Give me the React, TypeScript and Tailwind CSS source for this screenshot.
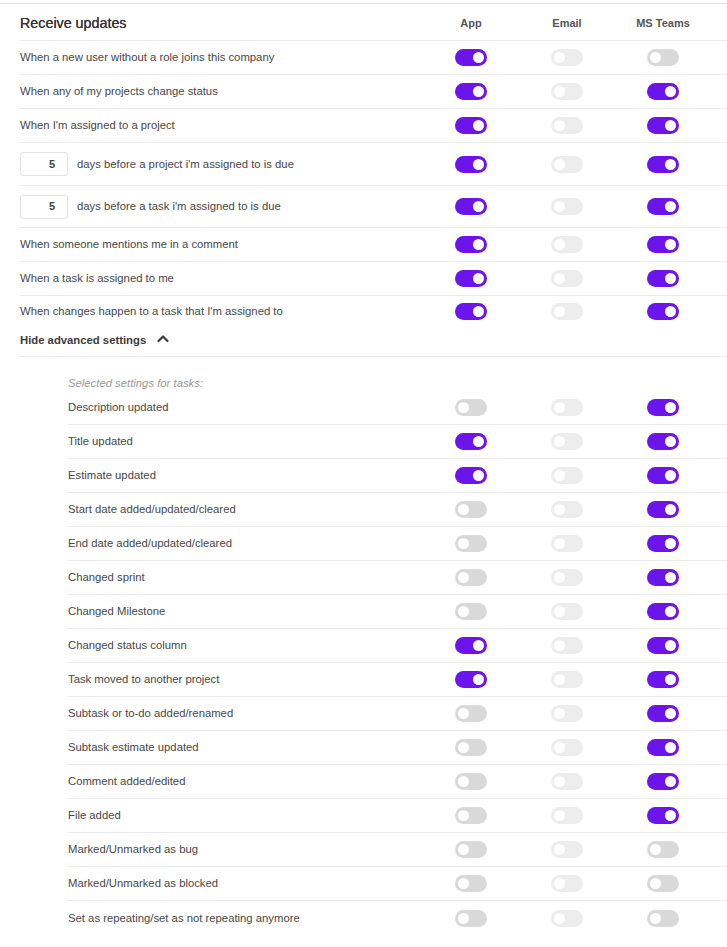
import { type FC } from "react";

type State = "on" | "off" | "disabled";

const Toggle: FC<{ state: State }> = ({ state }) => {
  const track =
    state === "on" ? "bg-[#6b15ec]" : state === "off" ? "bg-[#d9d9d9]" : "bg-[#ededed]";
  return (
    <div className={`flex h-[17px] w-[32px] items-center rounded-full px-[3px] ${track} ${state === "on" ? "justify-end" : "justify-start"}`}>
      <div className="h-[11px] w-[11px] rounded-full bg-white" />
    </div>
  );
};

const Cells: FC<{ app: State; email?: State; teams: State }> = ({ app, email = "disabled", teams }) => (
  <>
    <div className="flex w-[96px] justify-center">
      <Toggle state={app} />
    </div>
    <div className="flex w-[96px] justify-center">
      <Toggle state={email} />
    </div>
    <div className="flex w-[96px] justify-center">
      <Toggle state={teams} />
    </div>
  </>
);

const mainRows: { label: string; teams: State }[] = [
  { label: "When a new user without a role joins this company", teams: "off" },
  { label: "When any of my projects change status", teams: "on" },
  { label: "When I'm assigned to a project", teams: "on" },
];

const lowerRows = [
  "When someone mentions me in a comment",
  "When a task is assigned to me",
];

const taskRows: [string, State, State][] = [
  ["Description updated", "off", "on"],
  ["Title updated", "on", "on"],
  ["Estimate updated", "on", "on"],
  ["Start date added/updated/cleared", "off", "on"],
  ["End date added/updated/cleared", "off", "on"],
  ["Changed sprint", "off", "on"],
  ["Changed Milestone", "off", "on"],
  ["Changed status column", "on", "on"],
  ["Task moved to another project", "on", "on"],
  ["Subtask or to-do added/renamed", "off", "on"],
  ["Subtask estimate updated", "off", "on"],
  ["Comment added/edited", "off", "on"],
  ["File added", "off", "on"],
  ["Marked/Unmarked as bug", "off", "off"],
  ["Marked/Unmarked as blocked", "off", "off"],
  ["Set as repeating/set as not repeating anymore", "off", "off"],
];

const DaysRow: FC<{ text: string; h: string }> = ({ text, h }) => (
  <div className={`flex items-center border-b border-[#ebebeb] pr-[16px] ${h}`}>
    <div className="flex flex-1 items-center gap-[9px]">
      <div className="flex h-[24px] w-[48px] items-center justify-center rounded-[3px] border border-[#e3e3e3] pl-[16px] text-[11px] font-bold text-[#444]">
        5
      </div>
      <span>{text}</span>
    </div>
    <Cells app="on" teams="on" />
  </div>
);

export default function App() {
  return (
    <div className="min-h-[947px] bg-white pt-[3px] font-['Liberation_Sans',Arial,sans-serif] text-[11.3px] text-[#474747]">
      <div className="border-t border-[#e3e3e3] pl-[20px]">
        <div className="flex h-[37px] items-center border-b border-[#ebebeb] pr-[16px] pt-[3px]">
          <div className="flex-1 text-[14.3px] text-[#333] [text-shadow:0_0_0.4px_#333]">Receive updates</div>
          <div className="w-[96px] text-center text-[11px] font-bold text-[#555]">App</div>
          <div className="w-[96px] text-center text-[11px] font-bold text-[#555]">Email</div>
          <div className="w-[96px] text-center text-[11px] font-bold text-[#555]">MS Teams</div>
        </div>

        {mainRows.map((r) => (
          <div key={r.label} className="flex h-[34px] items-center border-b border-[#ebebeb] pr-[16px]">
            <div className="flex-1">{r.label}</div>
            <Cells app="on" teams={r.teams} />
          </div>
        ))}

        <DaysRow text="days before a project i'm assigned to is due" h="h-[43px]" />
        <DaysRow text="days before a task i'm assigned to is due" h="h-[42px]" />

        {lowerRows.map((label) => (
          <div key={label} className="flex h-[34px] items-center border-b border-[#ebebeb] pr-[16px]">
            <div className="flex-1">{label}</div>
            <Cells app="on" teams="on" />
          </div>
        ))}

        <div className="flex h-[31px] items-center pr-[16px]">
          <div className="flex-1">When changes happen to a task that I'm assigned to</div>
          <Cells app="on" teams="on" />
        </div>

        <div className="flex h-[30px] items-start border-b border-[#ebebeb] pt-[5px]">
          <span className="font-bold text-[#3b3b3b]">Hide advanced settings</span>
          <svg className="ml-[11px] mt-[2px]" width="12" height="9" viewBox="0 0 12 9" fill="none">
            <polyline points="1.5,7 6,2.5 10.5,7" stroke="#3b3b3b" strokeWidth="2.2" strokeLinecap="round" strokeLinejoin="round" />
          </svg>
        </div>

        <div className="pl-[48px] pt-[18px]">
          <div className="h-[16px] italic text-[#9a9a9a]">Selected settings for tasks:</div>
          {taskRows.map(([label, app, teams], i) => (
            <div
              key={label}
              className={`flex h-[34px] items-center pr-[16px] ${i < taskRows.length - 1 ? "border-b border-[#ebebeb]" : ""}`}
            >
              <div className="flex-1">{label}</div>
              <Cells app={app} teams={teams} />
            </div>
          ))}
        </div>
      </div>
    </div>
  );
}
